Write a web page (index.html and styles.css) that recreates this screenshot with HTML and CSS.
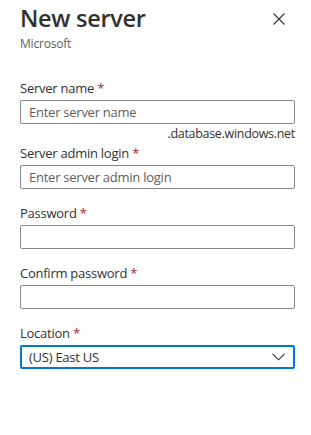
FILE: index.html
```html
<!DOCTYPE html>
<html lang="en">
<head>
  <meta charset="UTF-8" />
  <meta name="viewport" content="width=device-width, initial-scale=1" />
  <title>New server</title>
  <link rel="stylesheet" href="styles.css">
</head>
<body>

  <div class="blade">
    <!-- Header -->
    <div class="blade-header">
      <div class="title-block">
        <h1 class="blade-title">New server</h1>
        <div class="blade-subtitle">Microsoft</div>
      </div>
      <button class="close-button" aria-label="Close">
        <svg width="12" height="12" viewBox="0 0 12 12">
          <path d="M0.5 0.5 L11.5 11.5 M11.5 0.5 L0.5 11.5" stroke="#323130" stroke-width="1.1" fill="none" />
        </svg>
      </button>
    </div>

    <!-- Form -->
    <form class="form">
      <div class="field field-suffixed">
        <label class="field-label">Server name <span class="required">*</span></label>
        <input class="text-input" type="text" placeholder="Enter server name" />
        <div class="field-suffix">.database.windows.net</div>
      </div>

      <div class="field">
        <label class="field-label">Server admin login <span class="required">*</span></label>
        <input class="text-input" type="text" placeholder="Enter server admin login" />
      </div>

      <div class="field">
        <label class="field-label">Password <span class="required">*</span></label>
        <input class="text-input" type="password" />
      </div>

      <div class="field">
        <label class="field-label">Confirm password <span class="required">*</span></label>
        <input class="text-input" type="password" />
      </div>

      <div class="field">
        <label class="field-label">Location <span class="required">*</span></label>
        <div class="dropdown">
          <span class="dropdown-value">(US) East US</span>
          <svg class="dropdown-chevron" width="13" height="8" viewBox="0 0 13 8">
            <path d="M0.5 0.8 L6.5 6.8 L12.5 0.8" stroke="#323130" stroke-width="1.1" fill="none" />
          </svg>
        </div>
      </div>
    </form>
  </div>

</body>
</html>
```

FILE: styles.css
```css
:root {
  --text: #323130;
  --secondary-text: #605e5c;
  --border-color: #8a8886;
  --required: #a4262c;
  --accent: #0078d4;
}

* {
  box-sizing: border-box;
}

body {
  margin: 0;
  background: #ffffff;
  font-family: 'Open Sans', sans-serif;
  color: var(--text);
}

.blade {
  padding: 0 16px 0 20px;
}

.blade-header {
  display: flex;
  justify-content: space-between;
  align-items: flex-start;
  padding-top: 2px;
}

.blade-title {
  margin: 0;
  font-size: 23.5px;
  font-weight: 600;
  line-height: 32px;
  letter-spacing: -0.3px;
}

.blade-subtitle {
  margin-top: 2px;
  font-size: 12px;
  line-height: 16px;
  letter-spacing: -0.2px;
  color: var(--secondary-text);
}

.close-button {
  background: none;
  border: none;
  padding: 0;
  margin: 11px 10px 0 0;
  width: 12px;
  height: 12px;
  display: flex;
  cursor: pointer;
}

.form {
  margin-top: 26px;
}

.field {
  display: flex;
  flex-direction: column;
  margin-bottom: 14px;
}

.field-suffixed {
  margin-bottom: 0;
}

.field-label {
  font-size: 13px;
  line-height: 20px;
  letter-spacing: -0.25px;
  margin-bottom: 2px;
}

.required {
  color: var(--required);
}

.text-input {
  height: 24px;
  border: 1px solid var(--border-color);
  border-radius: 2px;
  padding: 0 8px;
  font-family: inherit;
  font-size: 13px;
  letter-spacing: -0.25px;
  color: var(--text);
  outline: none;
}

.text-input::placeholder {
  color: var(--secondary-text);
}

.field-suffix {
  text-align: right;
  font-size: 12.5px;
  line-height: 19px;
  letter-spacing: -0.3px;
}

.dropdown {
  height: 24px;
  border: 2px solid var(--accent);
  border-radius: 2px;
  padding: 0 8px 0 7px;
  display: flex;
  align-items: center;
  justify-content: space-between;
  font-size: 13px;
  letter-spacing: -0.25px;
}

.dropdown-chevron {
  display: block;
}
```
